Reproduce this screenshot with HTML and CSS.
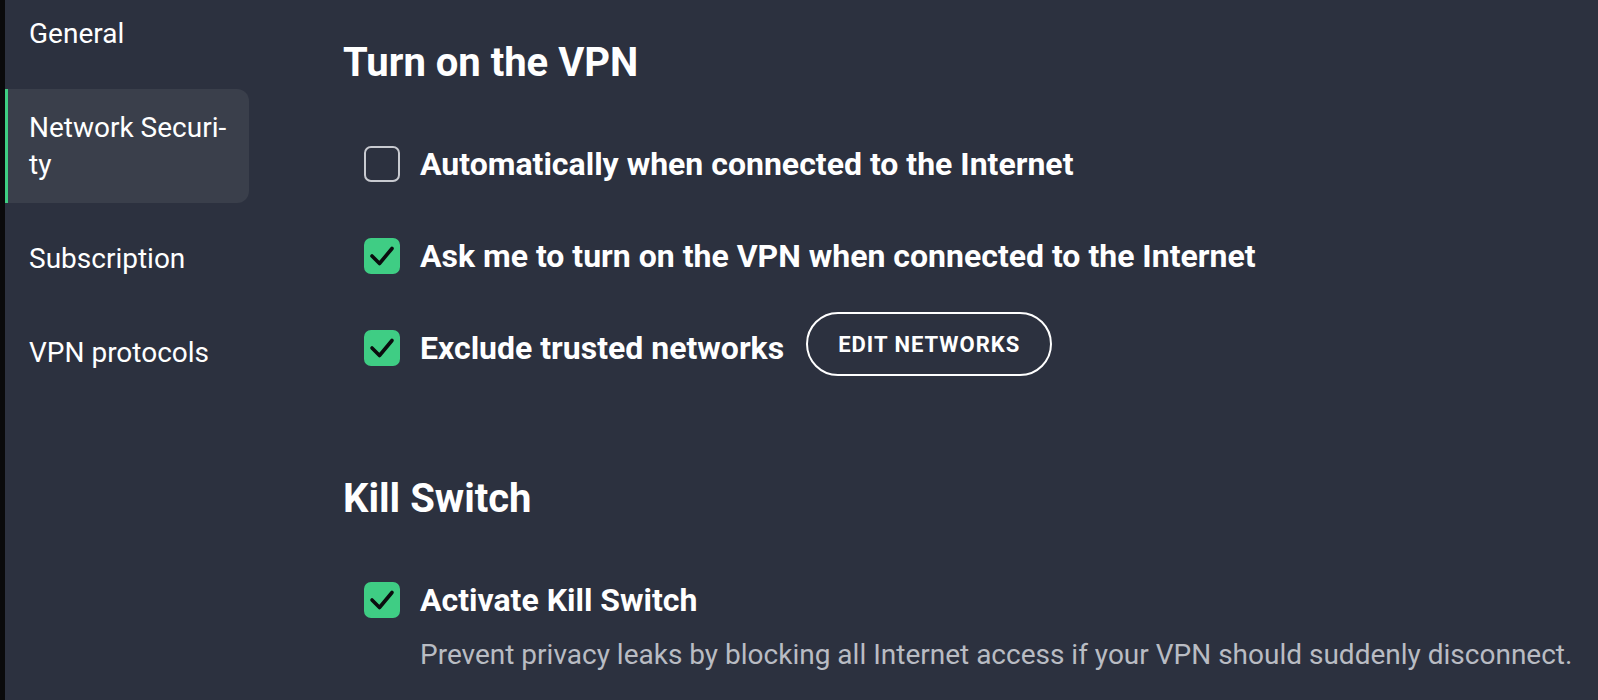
FILE: index.html
```html
<!DOCTYPE html>
<html lang="en">
<head>
    <meta charset="UTF-8">
    <meta name="viewport" content="width=device-width, initial-scale=1.0">
    <title>Settings - Network Security</title>

    <link rel="stylesheet" href="styles.css">
</head>
<body>
    <div class="app">
        <nav class="sidebar">
            <ul class="nav-list">
                <li class="nav-item">General</li>
                <li class="nav-item active">Network Securi&shy;ty</li>
                <li class="nav-item">Subscription</li>
                <li class="nav-item">VPN protocols</li>
            </ul>
        </nav>
        <main class="content">
            <section class="group">
                <h2>Turn on the VPN</h2>
                <div class="option">
                    <span class="check"></span>
                    <span class="option-label">Automatically when connected to the Internet</span>
                </div>
                <div class="option">
                    <span class="check checked">
                        <svg viewBox="0 0 36 36"><path d="M8 18 L15.5 25.5 L28 10.5"/></svg>
                    </span>
                    <span class="option-label">Ask me to turn on the VPN when connected to the Internet</span>
                </div>
                <div class="option">
                    <span class="check checked">
                        <svg viewBox="0 0 36 36"><path d="M8 18 L15.5 25.5 L28 10.5"/></svg>
                    </span>
                    <span class="option-label">Exclude trusted networks</span>
                    <button class="outline-btn">EDIT NETWORKS</button>
                </div>
            </section>
            <section class="group">
                <h2>Kill Switch</h2>
                <div class="option">
                    <span class="check checked">
                        <svg viewBox="0 0 36 36"><path d="M8 18 L15.5 25.5 L28 10.5"/></svg>
                    </span>
                    <span class="option-label">Activate Kill Switch</span>
                </div>
                <p class="option-desc">Prevent privacy leaks by blocking all Internet access if your VPN should suddenly disconnect.</p>
            </section>
        </main>
    </div>
</body>
</html>
```

FILE: styles.css
```css
body {
    margin: 0;
    font-family: Roboto, "Liberation Sans", sans-serif;
    background-color: #2c313f;
    color: #ffffff;
    height: 100vh;
    overflow: hidden;
}
.app {
    display: flex;
    height: 100vh;
    border-left: 5px solid #0a0a0b;
}
.sidebar {
    width: 244px;
    flex-shrink: 0;
}
.nav-list {
    list-style: none;
    margin: -5px 0 0 0;
    padding: 0;
    display: flex;
    flex-direction: column;
    gap: 17px;
}
.nav-item {
    padding: 20px 20px 20px 21px;
    border-left: 3px solid transparent;
    border-radius: 0 12px 12px 0;
    font-size: 28px;
    line-height: 37px;
    hyphens: manual;
}
.nav-item.active {
    background: #3a3f4b;
    border-left-color: #3fcf83;
}
.content {
    flex: 1;
    padding: 39px 0 0 94px;
}
.group {
    margin-bottom: 95px;
}
h2 {
    margin: 0 0 45px 0;
    font-size: 40px;
    line-height: 48px;
    font-weight: 700;
}
.option {
    display: flex;
    align-items: center;
    gap: 20px;
    min-height: 64px;
    margin-bottom: 28px;
    padding-left: 21px;
}
.group .option:last-of-type {
    margin-bottom: 0;
}
.check {
    width: 36px;
    height: 36px;
    box-sizing: border-box;
    border: 2px solid #c8cad0;
    border-radius: 7px;
    flex-shrink: 0;
}
.check.checked {
    background: #3fcd84;
    border-color: #3fcd84;
}
.check svg {
    display: block;
    width: 36px;
    height: 36px;
    margin: -2px;
}
.check path {
    fill: none;
    stroke: #0b0c0e;
    stroke-width: 3.6;
    stroke-linecap: round;
    stroke-linejoin: round;
}
.option-label {
    font-size: 32px;
    font-weight: 700;
    line-height: 38px;
}
.outline-btn {
    align-self: flex-start;
    margin: -4px 0 0 2px;
    height: 64px;
    padding: 0 30px;
    background: transparent;
    color: #ffffff;
    border: 2px solid #ffffff;
    border-radius: 32px;
    font-family: Roboto, "Liberation Sans", sans-serif;
    font-size: 22px;
    font-weight: 700;
    letter-spacing: 1px;
    cursor: pointer;
}
.option-desc {
    margin: 6px 0 0 77px;
    font-size: 28px;
    line-height: 34px;
    color: #b9bcc3;
}
```
